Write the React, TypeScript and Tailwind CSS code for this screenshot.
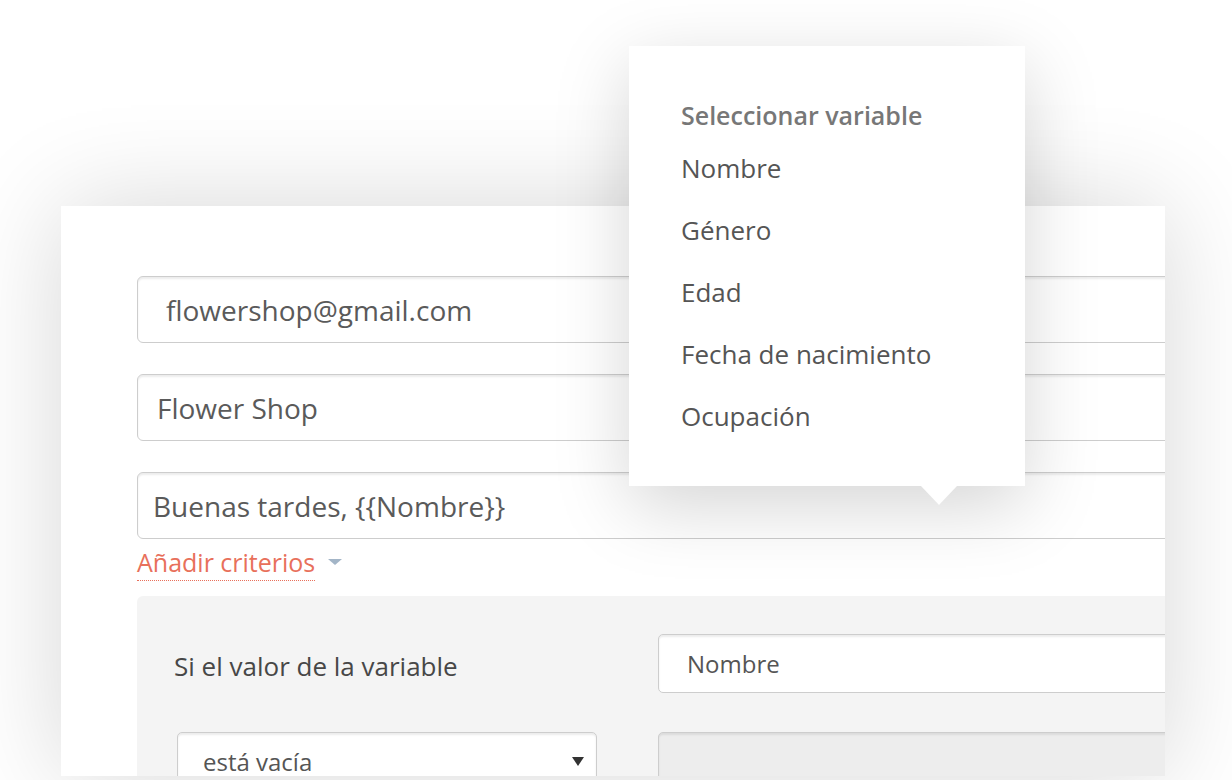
import React from "react";

const font = { fontFamily: '"Open Sans", "Noto Sans", sans-serif' };

function TextInput({ value, pl }: { value: string; pl: string }) {
  return (
    <div
      className={`h-[67px] w-[1100px] shrink-0 rounded-[6px] border border-[#cdcdcd] bg-white shadow-[inset_0_2px_2px_rgba(0,0,0,0.08)] flex items-center ${pl} text-[28px] text-[#5a5a5a]`}
    >
      {value}
    </div>
  );
}

export default function App() {
  const items = ["Nombre", "Género", "Edad", "Fecha de nacimiento", "Ocupación"];
  return (
    <div className="relative w-[1232px] h-[780px] overflow-hidden bg-white" style={font}>
      <div className="pt-[206px] pl-[61px]">
        <div className="w-[1104px] h-[570px] bg-white overflow-hidden shadow-[0_0_100px_rgba(0,0,0,0.16)] pl-[76px] pt-[70px]">
          <div className="flex flex-col gap-[31px]">
            <TextInput value="flowershop@gmail.com" pl="pl-[28px]" />
            <TextInput value="Flower Shop" pl="pl-[19px]" />
          </div>
          <div className="mt-[31px]">
            <TextInput value="Buenas tardes, {{Nombre}}" pl="pl-[15px]" />
          </div>
          <div className="mt-[6px] flex items-center">
            <span className="inline-block text-[25px] leading-[35px] text-[#e8705b] border-b border-dotted border-[#e8705b]">
              Añadir criterios
            </span>
            <span className="ml-[13px] mb-[2px] w-0 h-0 border-l-[7px] border-r-[7px] border-t-[6px] border-l-transparent border-r-transparent border-t-[#a3b5c7]" />
          </div>
          <div className="mt-[15px] w-[1100px] h-[300px] bg-[#f4f4f4] rounded-tl-[6px] pl-[37px] pt-[38px]">
            <div className="flex items-center">
              <div className="w-[484px] shrink-0 text-[26px] text-[#474747] mt-[6px]">Si el valor de la variable</div>
              <div className="h-[59px] w-[600px] shrink-0 rounded-[5px] border border-[#cdcdcd] bg-white shadow-[inset_0_2px_2px_rgba(0,0,0,0.08)] flex items-center pl-[28px] text-[24px] text-[#555]">
                Nombre
              </div>
            </div>
            <div className="flex mt-[39px]">
              <div className="ml-[3px] h-[59px] w-[420px] shrink-0 rounded-[5px] border border-[#cdcdcd] bg-white shadow-[inset_0_2px_2px_rgba(0,0,0,0.08)] flex items-center justify-between pl-[25px] pr-[12px] text-[24px] text-[#555]">
                <span>está vacía</span>
                <span className="w-0 h-0 border-l-[6.5px] border-r-[6.5px] border-t-[9px] border-l-transparent border-r-transparent border-t-[#333]" />
              </div>
              <div className="ml-[61px] h-[59px] w-[600px] shrink-0 rounded-[5px] border border-[#cdcdcd] bg-[#ededed] shadow-[inset_0_2px_2px_rgba(0,0,0,0.08)]" />
            </div>
          </div>
        </div>
      </div>

      <div className="absolute left-[629px] top-[46px] w-[396px] h-[440px] bg-white shadow-[0_20px_70px_rgba(0,0,0,0.17)] pl-[52px] pt-[52px]">
        <div className="text-[25px] leading-[34px] font-semibold text-[#777]">Seleccionar variable</div>
        <div className="mt-[5px]">
          {items.map((it) => (
            <div key={it} className="h-[62px] leading-[62px] text-[26px] text-[#555]">
              {it}
            </div>
          ))}
        </div>
        <span className="absolute left-[292px] top-full w-0 h-0 border-l-[18px] border-r-[18px] border-t-[19px] border-l-transparent border-r-transparent border-t-white" />
      </div>
    </div>
  );
}
